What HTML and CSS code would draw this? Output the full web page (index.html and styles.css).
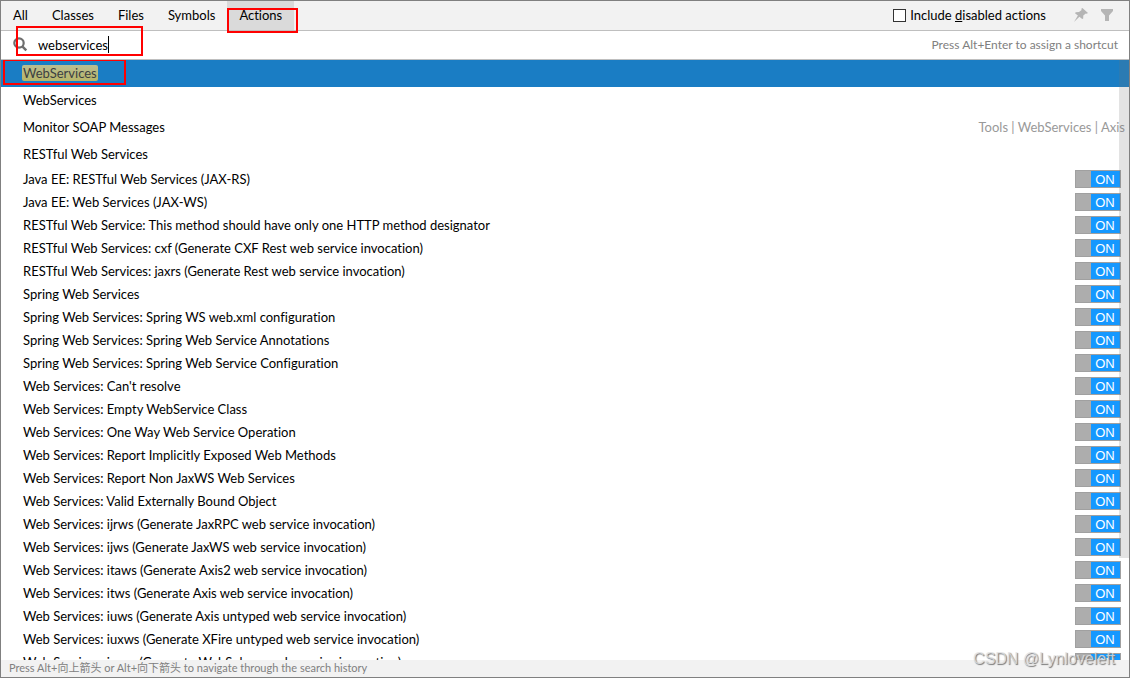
FILE: index.html
```html
<!DOCTYPE html>
<html lang="en">
<head>
<meta charset="utf-8">
<title>Search Everywhere</title>
<link rel="stylesheet" href="styles.css">
</head>
<body>
<main class="popup">
  <header class="header">
    <nav class="tabs">
      <button class="tab" type="button">All</button>
      <button class="tab" type="button">Classes</button>
      <button class="tab" type="button">Files</button>
      <button class="tab" type="button">Symbols</button>
      <button class="tab tab-active" type="button">Actions<span class="mark mark-tab"></span></button>
    </nav>
    <div class="options">
      <input class="check" type="checkbox" id="disabled-actions">
      <label for="disabled-actions">Include <u>d</u>isabled actions</label>
      <button class="tool pin" type="button" aria-label="Pin">
        <svg width="14" height="14" viewBox="0 0 14 14"><path fill="#b5b5b5" d="M8.4 0 14 5 12.6 5.8 11.8 5.4 9.3 7.5 9.2 10.6 8.2 11 5.4 8.8 0 14 3.9 7.6 1 5.2 1.7 4.2 5 4 7.6 2 7.3.8Z"/></svg>
      </button>
      <button class="tool" type="button" aria-label="Filter">
        <svg width="12" height="12" viewBox="0 0 12 12"><path fill="#b5b5b5" d="M0 0H12V2L8 6.5V12H4V6.5L0 2Z"/></svg>
      </button>
    </div>
  </header>
  <div class="search">
    <svg class="lens" width="15" height="15" viewBox="0 0 15 15"><circle cx="6" cy="6" r="4.7" fill="none" stroke="#6e6e6e" stroke-width="2.2"/><path d="M9.3 9.3 13.3 13.3" stroke="#6e6e6e" stroke-width="2.4"/></svg>
    <div class="field">
      <input class="query" type="text" aria-label="Search actions" value="webservices">
      <span class="caret"></span>
    </div>
    <span class="hint">Press Alt+Enter to assign a shortcut</span>
    <span class="mark mark-search"></span>
  </div>
  <section class="results">
    <ul class="list" id="list">
      <li class="row row-selected"><span class="match">WebServices</span><span class="mark mark-row"></span></li>
      <li class="row">WebServices</li>
      <li class="row">Monitor SOAP Messages<span class="path">Tools | WebServices | Axis</span></li>
      <li class="row">RESTful Web Services</li>
    </ul>
    <div class="scrollbar"></div>
  </section>
  <footer class="footer">Press Alt+向上箭头 or Alt+向下箭头 to navigate through the search history</footer>
  <div class="watermark">CSDN @Lynloveleft</div>
</main>
<script src="script.js"></script>
</body>
</html>
```

FILE: styles.css
```css
* {
  box-sizing: border-box;
}

body {
  margin: 0;
  color: #000;
  background: #fff;
  font: 13px/20px Lato, "Noto Sans CJK SC", sans-serif;
  font-variant-ligatures: none;
}

button,
input {
  margin: 0;
  padding: 0;
  border: 0;
  background: none;
  color: inherit;
  font: inherit;
}

.popup {
  position: relative;
  display: flex;
  flex-direction: column;
  height: 100vh;
  overflow: hidden;
  border: 1px solid #808080;
}

.header {
  display: flex;
  flex: none;
  justify-content: space-between;
  height: 30px;
  background: #f2f2f2;
  border-bottom: 1px solid #bfbfbf;
}

.tabs {
  display: flex;
}

.tab {
  position: relative;
  padding: 0 12px 1px;
}

.tab-active {
  background: #dadada;
}

.options {
  display: flex;
  align-items: center;
  padding: 0 16px 1px 0;
}

.check {
  appearance: none;
  width: 13px;
  height: 13px;
  margin-right: 4px;
  background: #fff;
  border: 1px solid #333;
}

.tool {
  display: flex;
}

.pin {
  margin: 0 13px 0 28px;
}

.search {
  position: relative;
  display: flex;
  flex: none;
  align-items: center;
  height: 29px;
  padding: 0 11px 1px 12px;
  border-bottom: 1px solid #bfbfbf;
}

.lens {
  flex: none;
  margin-right: 10px;
}

.field {
  display: flex;
  flex: 1;
  align-items: center;
}

.query {
  field-sizing: content;
  outline: 0;
}

.caret {
  width: 1px;
  height: 17px;
  background: #000;
}

.hint {
  color: #808080;
  font-size: 12px;
}

.results {
  position: relative;
  flex: 1;
  min-height: 0;
  overflow: hidden;
}

.list {
  margin: 0;
  padding: 0;
  list-style: none;
}

.row {
  position: relative;
  display: flex;
  align-items: center;
  justify-content: space-between;
  height: 27px;
  padding: 0 4px 1px 22px;
}

.row-selected {
  background: #1a7dc4;
}

.match {
  margin-left: -1px;
  padding: 0 1px;
  height: 16px;
  line-height: 16px;
  color: #3c3f41;
  background: linear-gradient(#b9bd91, #b7b568);
  border-radius: 2px;
}

.path {
  color: #999;
}

.row-setting {
  height: 23px;
  padding-right: 8px;
}

.switch {
  width: 46px;
  height: 18px;
  padding: 1px 0 0 14px;
  color: #fff;
  background: linear-gradient(90deg, #adadad 15px, #1598ff 15px);
  border: 1px solid #a0a0a0;
  font: 13px/15px "Liberation Sans", Arial, sans-serif;
}

.scrollbar {
  position: absolute;
  top: 0;
  right: 0;
  width: 10px;
  height: 498px;
  background: rgba(115, 115, 115, 0.2);
}

.footer {
  flex: none;
  height: 17px;
  padding-left: 8px;
  color: #808080;
  background: #f2f2f2;
  font-size: 11px;
  line-height: 16px;
}

.mark {
  position: absolute;
  z-index: 1;
  border: 2px solid #f00;
  pointer-events: none;
}

.mark-tab {
  top: 7px;
  left: 0;
  width: 71px;
  height: 25px;
}

.mark-search {
  top: -5px;
  left: 15px;
  width: 127px;
  height: 30px;
}

.mark-row {
  top: -1px;
  left: 2px;
  width: 123px;
  height: 26px;
}

.watermark {
  position: absolute;
  right: 14px;
  bottom: 8px;
  color: rgba(225, 225, 225, 0.8);
  font: 16px/20px "Liberation Sans", Arial, sans-serif;
  text-shadow: 1px 1px 1px #777;
}
```

FILE: script.js
```js
const settings = [
  "Java EE: RESTful Web Services (JAX-RS)",
  "Java EE: Web Services (JAX-WS)",
  "RESTful Web Service: This method should have only one HTTP method designator",
  "RESTful Web Services: cxf (Generate CXF Rest web service invocation)",
  "RESTful Web Services: jaxrs (Generate Rest web service invocation)",
  "Spring Web Services",
  "Spring Web Services: Spring WS web.xml configuration",
  "Spring Web Services: Spring Web Service Annotations",
  "Spring Web Services: Spring Web Service Configuration",
  "Web Services: Can't resolve",
  "Web Services: Empty WebService Class",
  "Web Services: One Way Web Service Operation",
  "Web Services: Report Implicitly Exposed Web Methods",
  "Web Services: Report Non JaxWS Web Services",
  "Web Services: Valid Externally Bound Object",
  "Web Services: ijrws (Generate JaxRPC web service invocation)",
  "Web Services: ijws (Generate JaxWS web service invocation)",
  "Web Services: itaws (Generate Axis2 web service invocation)",
  "Web Services: itws (Generate Axis web service invocation)",
  "Web Services: iuws (Generate Axis untyped web service invocation)",
  "Web Services: iuxws (Generate XFire untyped web service invocation)",
  "Web Services: iwws (Generate WebSphere web service invocation)"
];

const list = document.getElementById("list");
settings.forEach((name, i) => {
  const row = document.createElement("li");
  row.className = "row row-setting";
  const label = document.createElement("span");
  label.id = "setting-" + i;
  label.textContent = name;
  const toggle = document.createElement("button");
  toggle.type = "button";
  toggle.className = "switch";
  toggle.setAttribute("role", "switch");
  toggle.setAttribute("aria-checked", "true");
  toggle.setAttribute("aria-labelledby", label.id);
  toggle.textContent = "ON";
  row.append(label, toggle);
  list.append(row);
});
```
